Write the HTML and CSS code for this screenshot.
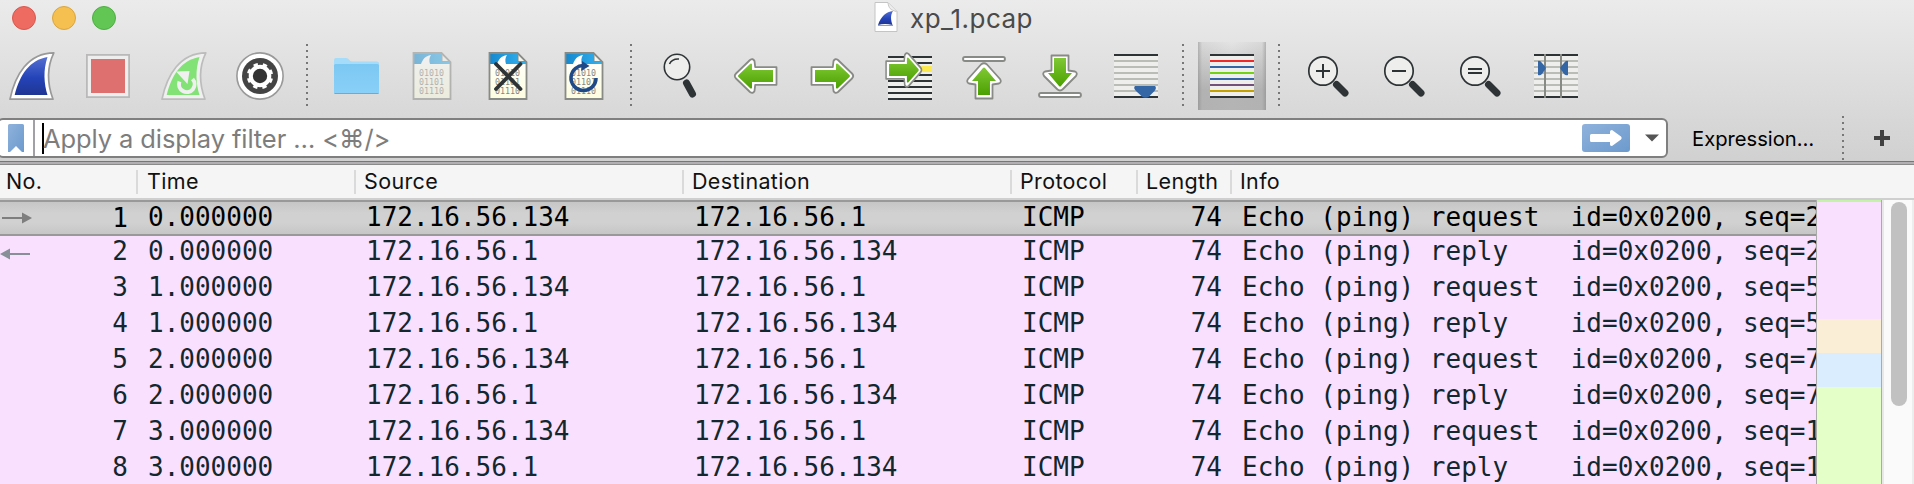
FILE: index.html
```html
<!DOCTYPE html>
<html lang="en">
<head>
<meta charset="utf-8">
<title>xp_1.pcap</title>
<link rel="stylesheet" href="styles.css">
</head>
<body>
<svg class="defs" width="0" height="0">
  <defs>
    <linearGradient id="blue" x1="0" y1="0" x2="0" y2="1"><stop offset="0" stop-color="#5470d2"/><stop offset=".55" stop-color="#2443b8"/><stop offset="1" stop-color="#1f3692"/></linearGradient>
    <linearGradient id="green" x1="0" y1="0" x2="0" y2="1"><stop offset="0" stop-color="#80c935"/><stop offset="1" stop-color="#4ba000"/></linearGradient>
    <linearGradient id="folder" x1="0" y1="0" x2="0" y2="1"><stop offset="0" stop-color="#7bc8f3"/><stop offset="1" stop-color="#8ad0f8"/></linearGradient>
    <linearGradient id="sky" x1="0" y1="0" x2="1" y2="0"><stop offset="0" stop-color="#1488cf"/><stop offset="1" stop-color="#35b2ee"/></linearGradient>
    <linearGradient id="paper" x1="0" y1="0" x2="0" y2="1"><stop offset="0" stop-color="#fff"/><stop offset="1" stop-color="#fdfde0"/></linearGradient>
    <linearGradient id="soft" x1="0" y1="0" x2="1" y2="1"><stop offset="0" stop-color="#8fb2dc"/><stop offset="1" stop-color="#6c9acd"/></linearGradient>
    <g id="doc">
      <path d="M-18.500-23H9.500L18.500-14V23H-18.500Z" fill="url(#paper)"/>
      <path d="M-18.500-23H9.500L18.500-14V-12H-18.500Z" fill="url(#sky)"/>
      <path d="M-11-12C-9-17-7-20-1-21C-3-18-3-15-2-12Z" fill="#fff"/>
      <path d="M10-22V-14.500H18Z" fill="#f4f6ee"/>
      <path d="M10-22V-14.500H18" fill="none" stroke="#888a85"/>
      <g class="bits"><text x="-13" y="0">01010</text><text x="-13" y="9">01101</text><text x="-13" y="18">01110</text></g>
      <path d="M-18.500-23H9.500L18.500-14V23H-18.500Z" fill="none" stroke="#888a85" stroke-width="1.800"/>
    </g>
    <path id="arrow" d="M-17-6H4V-12Q5-13 6-12L17.500-1Q18.500 0 17.500 1L6 12Q5 13 4 12V6H-17Z"/>
    <g id="go">
      <path d="M-20.500-8.800H.8L1.500-15Q3-18 6-16L20-2.500Q22.500 0 20 2.500L6 16Q3 18 1.500 15L.8 8.800H-20.500Z" fill="#fff" stroke="#888a85" stroke-width="1.800" stroke-linejoin="round"/>
    </g>
    <g id="lens">
      <path d="M8.500 8.500L17 17" stroke="#2e3436" stroke-width="7" stroke-linecap="round"/>
      <circle cx="-5" cy="-5" r="14.200" fill="#eeeeec" stroke="#2e3436" stroke-width="1.700"/>
    </g>
  </defs>
</svg>
<div class="window">
  <header class="chrome">
    <div class="titlebar">
      <div class="lights"><i class="light red"></i><i class="light amber"></i><i class="light green"></i></div>
      <div class="title">
        <svg width="24" height="32" viewBox="0 0 24 32"><path d="M1 1.500H14L23 10.500V30.500H1Z" fill="#fff" stroke="#c4c4c4"/><path d="M14 2C15 7 16 9 22.500 10.500" fill="#eee" stroke="#c4c4c4"/><path d="M4 24C7 15 12 11 19 10C16 15 17 19 18.500 24Q11 22 4 24Z" fill="url(#blue)"/><path d="M4 24.500H19" stroke="#7ea0db"/></svg>
        <span>xp_1.pcap</span>
      </div>
    </div>
    <nav class="toolbar">
      <svg class="tool" viewBox="-38 -34 76 68"><path d="M-22 23.200C-17-1-4-23 21.800-23.200C15-9 15 7 21 23.200Z" fill="#fff" stroke="#999" stroke-width="1.700" stroke-linejoin="round"/><path d="M-17.300 19C-12-2-2-16 15.500-19C11-6 12 8 15.500 19Z" fill="url(#blue)"/></svg>
      <svg class="tool" viewBox="-38 -34 76 68"><rect x="-21.100" y="-21.100" width="42.200" height="42.200" fill="#eee" stroke="#b9b9b9" stroke-width="1.800"/><rect x="-17" y="-17" width="34" height="34" fill="#df7070"/></svg>
      <svg class="tool" viewBox="-38 -34 76 68"><path d="M-22 23.200C-17-1-4-23 21.800-23.200C15-9 15 7 21 23.200Z" fill="#f0f0f0" stroke="#bcbcbc" stroke-width="1.700" stroke-linejoin="round"/><path d="M-17.300 19C-12-2-2-16 15.500-19C11-6 12 8 15.500 19Z" fill="#82e276"/><path d="M8.500 3A7.800 7.800 0 1 1-4.500 5.500" fill="none" stroke="#f0f0f0" stroke-width="4"/><path d="M-8-4.500L5.500-5L3.500 8Z" fill="#f0f0f0"/></svg>
      <svg class="tool" viewBox="-38 -34 76 68"><circle r="23.100" fill="#fff" stroke="#999" stroke-width="1.600"/><circle r="18" fill="#444"/><circle r="11.300" fill="#fff"/><circle r="11.700" fill="none" stroke="#fff" stroke-width="3" stroke-dasharray="4.300 4.889" transform="rotate(12)"/><circle r="7.200" fill="#333"/></svg>
      <i class="dots"></i>
      <svg class="tool" viewBox="-38 -34 76 68"><path d="M-22-14V-16Q-22-18-20-18H-10Q-8-18-7-16.500Q-6-14.500-4-14.500H21Q23-14.500 23-12.500V-8H-22Z" fill="#a4dcfa"/><rect x="-22" y="-12" width="45" height="30" rx="1.500" fill="url(#folder)"/><path d="M-21.500 17.500H22.500" stroke="#66acd4"/></svg>
      <svg class="tool faded" viewBox="-38 -34 76 68"><use href="#doc"/></svg>
      <svg class="tool" viewBox="-38 -34 76 68"><use href="#doc"/><path d="M-12-12L12.500 13M12.500-12L-12 13" stroke="#2e3436" stroke-width="3.800" stroke-linecap="round"/></svg>
      <svg class="tool" viewBox="-38 -34 76 68"><use href="#doc"/><path d="M12 2A12.500 12.500 0 1 1 1-10.400" fill="none" stroke="#204a87" stroke-width="3.600"/><path d="M-2-15L5.500-10L-3-5Z" fill="#204a87"/></svg>
      <i class="dots"></i>
      <svg class="tool" viewBox="-38 -34 76 68"><path d="M6.500 7L12.500 18" stroke="#2e3436" stroke-width="7" stroke-linecap="round"/><circle cx="-3" cy="-9" r="12.700" fill="#eeeeec" stroke="#2e3436" stroke-width="1.600"/><path d="M-10.500-12Q-8-17.500-1-17" fill="none" stroke="#2e3436" stroke-width="1.600"/></svg>
      <svg class="tool" viewBox="-38 -34 76 68"><g transform="scale(-1 1)"><use href="#go"/><use href="#arrow" fill="url(#green)"/></g></svg>
      <svg class="tool" viewBox="-38 -34 76 68"><use href="#go"/><use href="#arrow" fill="url(#green)"/></svg>
      <svg class="tool" viewBox="-38 -34 76 68"><rect x="-20" y="-20" width="44" height="44" fill="#eeeeec"/><rect x="10" y="-10" width="14" height="6" fill="#fce94f"/><path d="M-20-19H24M-20-13H24M-20-1H24M-20 5H24M-20 11H24M-20 17H24M-20 23H24" stroke="#2e3436" stroke-width="2"/><g transform="translate(-4.500 -6) scale(.85 1)"><use href="#go"/><use href="#arrow" fill="url(#green)"/></g></svg>
      <svg class="tool" viewBox="-38 -34 76 68"><rect x="-21" y="-19" width="42" height="4" rx="2" fill="#fff" stroke="#888a85" stroke-width="1.800"/><path d="M-8.500 22.500V8.500L-15 7.500Q-18 6-16 3L-3-11.500Q0-14 3-11.500L16 3Q18 6 15 7.500L8.500 8.500V22.500Z" fill="#fff" stroke="#888a85" stroke-width="1.800" stroke-linejoin="round"/><path d="M-6 19V5H-12L-1-8Q0-9 1-8L12 5H6V19Z" fill="url(#green)"/></svg>
      <svg class="tool" viewBox="-38 -34 76 68"><rect x="-21" y="17" width="42" height="4" rx="2" fill="#fff" stroke="#888a85" stroke-width="1.800"/><path d="M-8.500-20.500V-5.500L-15-4.500Q-18-3-16 0L-3 13Q0 16 3 13L16 0Q18-3 15-4.500L8.500-5.500V-20.500Z" fill="#fff" stroke="#888a85" stroke-width="1.800" stroke-linejoin="round"/><path d="M-6-18V-3H-12L-1 10Q0 11 1 10L12-3H6V-18Z" fill="url(#green)"/></svg>
      <svg class="tool" viewBox="-38 -34 76 68"><rect x="-22" y="-22" width="44" height="44" fill="#eeeeec"/><path d="M-22-15H22M-22-9H22M-22-3H22M-22 3H22M-22 9H22M-22 15H22" stroke="#babdb6" stroke-width="2"/><path d="M-22-21H22M-22 21H22" stroke="#2e3436" stroke-width="2"/><path d="M-1 10H19Q21 12 18.500 15L13 20.500Q9.500 23 6 20.500L0 15Q-3 12-1 10Z" fill="#3465a4"/></svg>
      <i class="dots"></i>
      <svg class="tool pressed" viewBox="-38 -34 76 68"><rect x="-22" y="-22" width="44" height="44" fill="#eeeeec"/><g stroke-width="2"><path d="M-22-21H22M-22 21H22" stroke="#2e3436"/><path d="M-22-15H22" stroke="#ef2929"/><path d="M-22-9H22M-22 3H22" stroke="#3465a4"/><path d="M-22-3H22" stroke="#73d216"/><path d="M-22 9H22" stroke="#75507b"/><path d="M-22 15H22" stroke="#c4a000"/></g></svg>
      <i class="dots"></i>
      <svg class="tool" viewBox="-38 -34 76 68"><use href="#lens"/><path d="M-12-5H2M-5-12V2" stroke="#2e3436" stroke-width="2"/></svg>
      <svg class="tool" viewBox="-38 -34 76 68"><use href="#lens"/><path d="M-12-5H2" stroke="#2e3436" stroke-width="2"/></svg>
      <svg class="tool" viewBox="-38 -34 76 68"><use href="#lens"/><path d="M-12-7H2M-12-3H2" stroke="#2e3436" stroke-width="2"/></svg>
      <svg class="tool" viewBox="-38 -34 76 68"><rect x="-22" y="-22" width="44" height="44" fill="#eeeeec"/><path d="M-22-15H22M-22-9H22M-22-3H22M-22 3H22M-22 9H22M-22 15H22" stroke="#babdb6" stroke-width="2"/><path d="M-22-21H22M-22 21H22" stroke="#2e3436" stroke-width="2"/><path d="M-11-22V22M5-22V22" stroke="#888a85" stroke-width="2"/><path d="M-18-15Q-16-16-14-13L-10.500-9Q-10-8-10.500-7L-14-2Q-16 0-18-1ZM12-15Q10-16 8-13L4.500-9Q4-8 4.500-7L8-2Q10 0 12-1Z" fill="#3465a4"/></svg>
    </nav>
    <div class="filterbar">
      <div class="filter">
        <svg class="bookmark" width="16" height="28"><path d="M0 1.500Q0 0 1.500 0H14.500Q16 0 16 1.500V28H14L8 22L2 28H0Z" fill="url(#soft)"/></svg>
        <i class="rule"></i><i class="caret"></i>
        <span class="hint">Apply a display filter … &lt;⌘/&gt;</span>
        <svg class="apply" width="48" height="28"><rect width="48" height="28" rx="3" fill="url(#soft)"/><path d="M9.500 10H28V7.500Q28 6 30 6L39 12.500Q40.500 14 39 15.500L30 22Q28 22 28 20.500V18H9.500Q8 18 8 16.500V11.500Q8 10 9.500 10Z" fill="#fff"/></svg>
        <svg class="drop" width="14" height="8"><path d="M0 .5H14L7 7.500Z" fill="#555"/></svg>
      </div>
      <span class="expression">Expression…</span>
      <i class="dots short"></i>
      <svg class="plus" width="16" height="16"><path d="M8 0V16M0 8H16" stroke="#404040" stroke-width="4"/></svg>
    </div>
  </header>
  <div class="row head"><span>No.</span><span>Time</span><span>Source</span><span>Destination</span><span>Protocol</span><span>Length</span><span>Info</span></div>
  <main class="body">
    <div class="packets">
      <div class="row selected"><span class="num"><svg width="32" height="12"><path d="M2 6H23" stroke="#7e7e7e" stroke-width="2"/><path d="M22 .5L32 6L22 11.500Z" fill="#7e7e7e"/></svg>1</span><span>0.000000</span><span>172.16.56.134</span><span>172.16.56.1</span><span>ICMP</span><span class="len">74</span><span>Echo (ping) request  id=0x0200, seq=2</span></div>
      <div class="row second"><span class="num"><svg class="back" width="32" height="12"><path d="M9 6H30" stroke="#879097" stroke-width="2"/><path d="M10 .5L0 6L10 11.500Z" fill="#879097"/></svg>2</span><span>0.000000</span><span>172.16.56.1</span><span>172.16.56.134</span><span>ICMP</span><span class="len">74</span><span>Echo (ping) reply    id=0x0200, seq=2</span></div>
      <div class="row"><span class="num">3</span><span>1.000000</span><span>172.16.56.134</span><span>172.16.56.1</span><span>ICMP</span><span class="len">74</span><span>Echo (ping) request  id=0x0200, seq=5</span></div>
      <div class="row"><span class="num">4</span><span>1.000000</span><span>172.16.56.1</span><span>172.16.56.134</span><span>ICMP</span><span class="len">74</span><span>Echo (ping) reply    id=0x0200, seq=5</span></div>
      <div class="row"><span class="num">5</span><span>2.000000</span><span>172.16.56.134</span><span>172.16.56.1</span><span>ICMP</span><span class="len">74</span><span>Echo (ping) request  id=0x0200, seq=7</span></div>
      <div class="row"><span class="num">6</span><span>2.000000</span><span>172.16.56.1</span><span>172.16.56.134</span><span>ICMP</span><span class="len">74</span><span>Echo (ping) reply    id=0x0200, seq=7</span></div>
      <div class="row"><span class="num">7</span><span>3.000000</span><span>172.16.56.134</span><span>172.16.56.1</span><span>ICMP</span><span class="len">74</span><span>Echo (ping) request  id=0x0200, seq=1</span></div>
      <div class="row"><span class="num">8</span><span>3.000000</span><span>172.16.56.1</span><span>172.16.56.134</span><span>ICMP</span><span class="len">74</span><span>Echo (ping) reply    id=0x0200, seq=1</span></div>
    </div>
    <div class="minimap"></div>
    <div class="scrollbar"><div class="thumb"></div></div>
  </main>
</div>
</body>
</html>
```

FILE: styles.css
```css
* { box-sizing: border-box; }
body { margin: 0; overflow: hidden; font-family: Inter, "Liberation Sans", sans-serif; }
.defs { display: block; }
svg { flex: none; }
.window { width: 1914px; height: 484px; overflow: hidden; display: flex; flex-direction: column; background: #f5f5f5; }
.chrome { height: 165px; flex: none; background: linear-gradient(#ebebeb, #d0d0d0); border-bottom: 1px solid #8a8a8a; box-shadow: inset 0 -1px #b1afb1, inset 0 -2px #b1afb1, inset 0 -3px #777; }
.titlebar { height: 42px; display: grid; grid-template-columns: 1fr auto 1fr; }
.lights { display: flex; gap: 16px; padding: 6px 0 0 12px; }
.light { width: 24px; height: 24px; border-radius: 50%; border: 1px solid; }
.red { background: #ed6b60; border-color: #d9574d; }
.amber { background: #f5c04f; border-color: #d9a540; }
.green { background: #62c655; border-color: #4fae43; }
.title { display: flex; align-items: flex-start; gap: 12px; padding: 1px 7px 0 0; font-size: 26px; line-height: 35px; color: #4a4a4a; }
.title span { letter-spacing: .45px; }
.toolbar { display: flex; height: 68px; margin-left: -6px; }
.tool { width: 76px; height: 68px; }
.faded { opacity: .5; }
.bits { font: 8.3px "DejaVu Sans Mono", monospace; fill: #85867f; }
.pressed { background: linear-gradient(90deg, #8888, #aaa3 6%, #aaa0 50%, #aaa3 94%, #8888) center / 68px 100% no-repeat, linear-gradient(#e4e4e4, #b4b4b4 70%) center / 68px 100% no-repeat; }
.dots { flex: none; width: 20px; height: 62px; margin-top: 2px; background: repeating-linear-gradient(#777 0 2px, transparent 2px 6px) 8px 0 / 2px 100% no-repeat; }
.dots.short { height: 45px; margin: 0; }
.filterbar { display: flex; align-items: center; height: 40px; margin-top: 8px; }
.filter { width: 1671px; height: 40px; margin-left: -3px; display: flex; align-items: center; background: #fff; border: 2px solid #7f7f7f; border-radius: 6px; flex: none; }
.bookmark { margin-left: 9px; }
.rule { width: 2px; height: 36px; margin-left: 9px; background: #a0a0a6; }
.caret { width: 2px; height: 31px; margin-left: 7px; background: #000; }
.hint { flex: 1; font-size: 25.5px; letter-spacing: -.1px; color: #7d7d7d; white-space: pre; margin-left: -1px; }
.apply { margin-right: 15px; }
.drop { margin-right: 7px; }
.expression { margin-left: 24px; width: 142px; font-size: 20.2px; white-space: nowrap; }
.plus { margin-left: 20px; }
.row { display: grid; grid-template-columns: 138px 218px 328px 328px 126px 94px 1fr; height: 36px; line-height: 36px; white-space: pre; font-family: "DejaVu Sans Mono", monospace; font-size: 26px; color: #12272e; background: #fae0ff; flex: none; }
.row > span { padding-left: 10px; overflow: hidden; }
.row > .num { display: flex; align-items: center; justify-content: flex-end; padding: 0 10px 0 0; }
.num svg { margin-right: auto; }
.back { margin-top: 5px; }
.row > .len { text-align: right; padding: 0 10px 0 0; }
.selected { background: linear-gradient(#c6c6c6, #d1d1d1 35%, #d1d1d1 65%, #c6c6c6); border: 2px solid #999; border-width: 2px 0; color: #000; line-height: 31px; }
.second { height: 33px; line-height: 30px; }
.second .num { height: 30px; }
.row.head { height: 35px; background: #f5f5f5; border-bottom: 2px solid #cfcfcf; font-family: Inter, sans-serif; font-size: 21.5px; line-height: 33px; color: #111; letter-spacing: .35px; }
.row.head > span { padding-left: 8px; background: linear-gradient(#dadada, #dadada) right 0 top 5px / 2px 24px no-repeat; }
.row.head > span:nth-child(2) { padding-left: 9px; }
.row.head > span:first-child { padding-left: 6px; }
.row.head > span:last-child { background: none; }
.body { display: flex; flex: 1; min-height: 0; }
.packets { width: 1816px; overflow: hidden; flex: none; }
.minimap { width: 66px; flex: none; border: 1px solid #aaa; border-width: 0 1px; background: linear-gradient(#c3f2a8 2px, #fae0ff 2px 119px, #faeed6 119px 153px, #daedff 153px 187px, #e4ffc7 187px); }
.scrollbar { flex: 1; background: #fafafa; border-left: 2px solid #e8e8e8; border-right: 2px solid #ededed; }
.thumb { width: 16px; height: 204px; margin: 2px 0 0 7px; border-radius: 8px; background: #c1c1c1; }
```
